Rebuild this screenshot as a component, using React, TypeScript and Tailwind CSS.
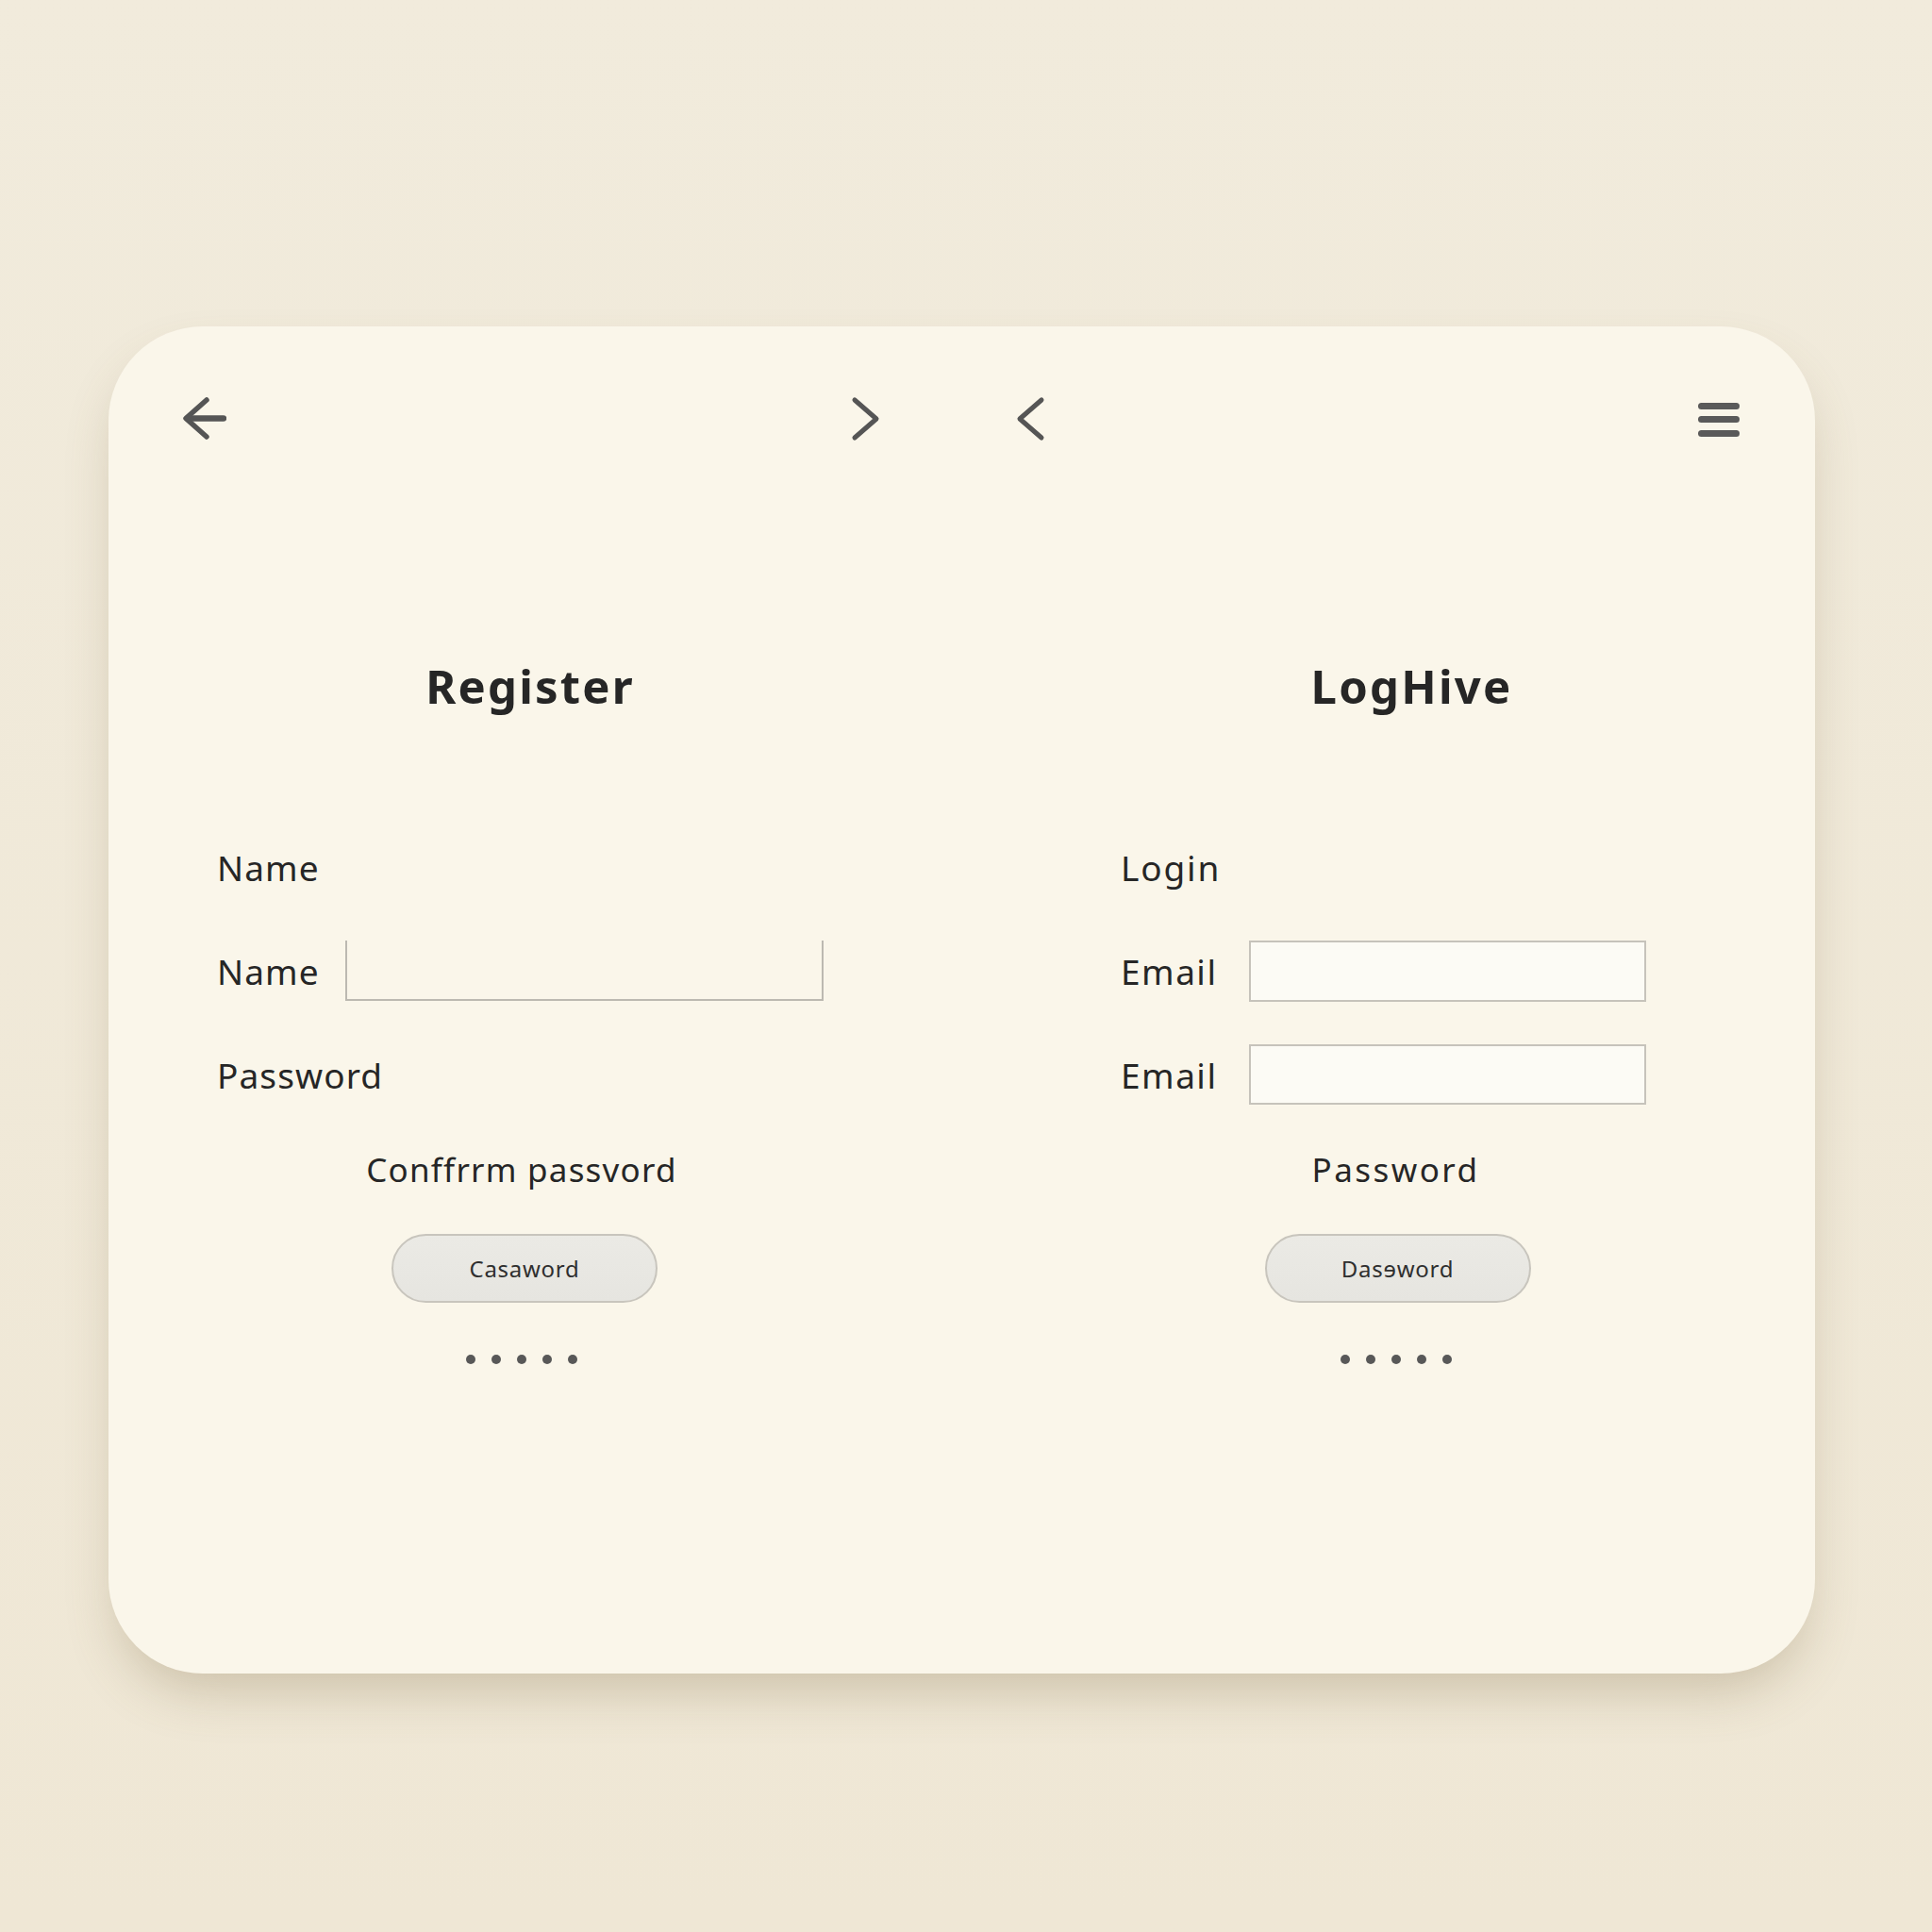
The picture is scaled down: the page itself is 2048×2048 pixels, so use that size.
import React from "react";

const font = { fontFamily: '"Noto Sans", "Open Sans", sans-serif' };

function BackArrow() {
  return (
    <svg width="50" height="50" viewBox="0 0 50 50" fill="none" stroke="#555555" strokeLinecap="round" strokeLinejoin="round">
      <path d="M29 5 L7 24.5 L29 44" strokeWidth="5.5" />
      <path d="M9 24.5 H47" strokeWidth="6.5" />
    </svg>
  );
}

function ChevronRight() {
  return (
    <svg width="32" height="48" viewBox="0 0 32 48" fill="none" stroke="#555555" strokeWidth="5" strokeLinecap="round" strokeLinejoin="round">
      <path d="M5 4 L28 24 L5 44" />
    </svg>
  );
}

function ChevronLeft() {
  return (
    <svg width="32" height="48" viewBox="0 0 32 48" fill="none" stroke="#555555" strokeWidth="5" strokeLinecap="round" strokeLinejoin="round">
      <path d="M27 4 L4 24 L27 44" />
    </svg>
  );
}

function Hamburger() {
  return (
    <svg width="44" height="40" viewBox="0 0 44 40" fill="#5a5a5a">
      <rect x="0" y="3" width="44" height="7" rx="3.5" />
      <rect x="0" y="17" width="44" height="7" rx="3.5" />
      <rect x="0" y="32" width="44" height="7" rx="3.5" />
    </svg>
  );
}

function Dots() {
  return (
    <div className="flex gap-[17px]">
      {[0, 1, 2, 3, 4].map((i) => (
        <span key={i} className="block h-[10px] w-[10px] rounded-full bg-[#585858]" />
      ))}
    </div>
  );
}

function PillButton({ label }: { label: string }) {
  return (
    <button className="h-[73px] w-[282px] rounded-full border-2 border-[#c8c5bd] bg-linear-to-b from-[#ebeae5] to-[#e6e5e0] text-[24px] leading-none tracking-[0.03em] text-[#2f2f2f]">
      {label}
    </button>
  );
}

export default function App() {
  return (
    <div style={font} className="min-h-screen w-full bg-linear-to-b from-[#f1ebdc] to-[#efe7d5] pl-[115px] pt-[346px] pb-[274px] text-[#262626]">
      <div className="flex h-[1428px] w-[1809px] rounded-[100px] bg-[#faf6ea] shadow-[0_28px_55px_-12px_rgba(120,100,60,0.3)]">
        {/* Register */}
        <section className="flex w-[890px] flex-col pt-[75px]">
          <div className="flex h-[46px] items-center justify-between pl-[75px] pr-[72px]">
            <BackArrow />
            <ChevronRight />
          </div>

          <h1 className="mt-[236px] flex justify-center pl-[4px] text-[49px] font-bold leading-none tracking-[0.045em]">Register</h1>

          <div className="mt-[135px] flex h-[64px] items-center pl-[115px] text-[37px] leading-none tracking-[0.03em]">Name</div>

          <div className="mt-[46px] flex h-[64px] items-center pl-[115px]">
            <span className="w-[136px] text-[37px] leading-none tracking-[0.03em]">Name</span>
            <div className="h-[64px] w-[507px] border-x-2 border-b-2 border-[#bcb9b1]" />
          </div>

          <div className="mt-[46px] flex h-[64px] items-center pl-[115px] text-[37px] leading-none tracking-[0.03em]">Password</div>

          <div className="mt-[36px] flex h-[64px] items-center justify-center pr-[14px] text-[35px] leading-none tracking-[0.035em]">
            Conffrrm passvord
          </div>

          <div className="mt-[37px] flex justify-center pr-[8px]">
            <PillButton label="Casaword" />
          </div>

          <div className="mt-[55px] flex justify-center pr-[15px]">
            <Dots />
          </div>
        </section>

        {/* Login */}
        <section className="flex w-[919px] flex-col pt-[75px]">
          <div className="flex h-[46px] items-center justify-between pl-[72px] pr-[80px]">
            <ChevronLeft />
            <Hamburger />
          </div>

          <h1 className="mt-[236px] flex justify-center pl-[64px] text-[49px] font-bold leading-none tracking-[0.045em]">LogHive</h1>

          <div className="mt-[135px] flex h-[64px] items-center pl-[183px] text-[37px] leading-none tracking-[0.05em]">Login</div>

          <div className="mt-[46px] flex h-[64px] items-center pl-[183px]">
            <span className="w-[136px] text-[37px] leading-none tracking-[0.04em]">Email</span>
            <div className="h-[65px] w-[421px] border-2 border-[#c6c3bb] bg-[#fcfbf5]" />
          </div>

          <div className="mt-[46px] flex h-[64px] items-center pl-[183px]">
            <span className="w-[136px] text-[37px] leading-none tracking-[0.04em]">Email</span>
            <div className="h-[64px] w-[421px] border-2 border-[#c6c3bb] bg-[#fcfbf5]" />
          </div>

          <div className="mt-[36px] flex h-[64px] items-center justify-center pl-[30px] text-[35px] leading-none tracking-[0.07em]">
            Password
          </div>

          <div className="mt-[37px] flex justify-center pl-[34px]">
            <PillButton label="Dasɘword" />
          </div>

          <div className="mt-[55px] flex justify-center pl-[30px]">
            <Dots />
          </div>
        </section>
      </div>
    </div>
  );
}
